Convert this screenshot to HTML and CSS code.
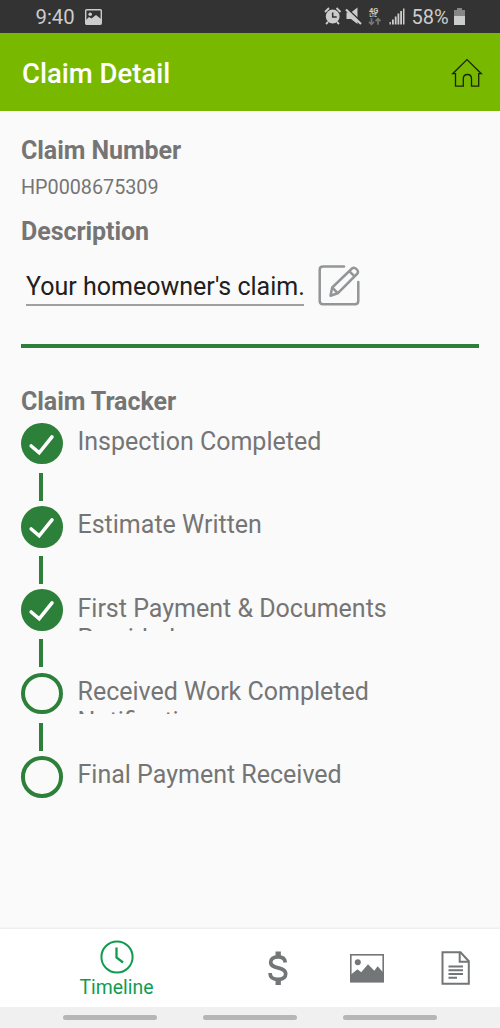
FILE: index.html
```html
<!DOCTYPE html>
<html lang="en">
<head>
<meta charset="utf-8">
<title>Claim Detail</title>
<link rel="stylesheet" href="styles.css">
</head>
<body>
<div class="screen">
  <div class="status">
    <span class="time">9:40</span>
    <svg class="pic" width="17" height="16" viewBox="0 0 17 16"><rect x=".7" y=".7" width="15.6" height="14.6" rx="1" fill="none" stroke="#ccc" stroke-width="1.4"/><circle cx="5.2" cy="5.2" r="1.8" fill="#ccc"/><path d="M1 11l3-3 2.500 1.500L11 6l5 4v5H1z" fill="#ccc"/></svg>
    <svg class="sys" width="82" height="19" viewBox="0 0 82 19">
      <path d="M1 5l4-4M12.500 1l4 4M4 15l-2 2M13 15l2 2" fill="none" stroke="#ccc" stroke-width="1.8"/>
      <circle cx="8.700" cy="9.500" r="6.900" fill="#ccc"/><path d="M8.700 5.500v4.600h4" fill="none" stroke="#333" stroke-width="1.500"/>
      <path d="M22.500 5.500h4.500l6.500-5v16.500l-6.500-5h-4.500z" fill="#ccc"/><path d="M22 3.500l15 14" transform="translate(1.300 -1.600)" stroke="#333" stroke-width="1.800"/><path d="M22 2.500l15 14.500" stroke="#ccc" stroke-width="2.200"/>
      <text x="45" y="6" class="gen">4G</text><text x="45.500" y="10.300" class="lte">LTE</text>
      <path d="M47.500 11.300v6M45 14.800l2.500 2.500 2.500-2.500M54 17.800V12M51.500 14.200l2.500-2.500 2.500 2.500" fill="none" stroke="#777" stroke-width="1.700"/>
      <path d="M65.500 15h1.400v2.500h-1.400zM68 12.500h1.800v5H68zM70.800 9.500h1.800v8h-1.800zM73.500 6.500h1.800v11h-1.800zM76.200 4H78v13.500h-1.800zM79 1.500h1.500v16H79z" fill="#ccc"/>
    </svg>
    <span class="pct">58%</span>
    <svg class="bat" width="11" height="17" viewBox="0 0 11 17"><path d="M3 0h5v2h3v15H0V2h3z" fill="#858585"/><path d="M0 8h11v9H0z" fill="#ccc"/></svg>
  </div>
  <header class="bar">
    <h1>Claim Detail</h1>
    <svg class="home" width="32" height="30" viewBox="0 0 32 30"><path d="M4.500 15.700H1.700L16 1.600l14.300 14.100h-2.600V28.200h-7.200v-7.400c0-2.700-1.500-4.300-4-4.300s-4.200 1.600-4.200 4.300v7.400H4.500z" fill="none" stroke="#182600" stroke-width="1.300"/></svg>
  </header>
  <main>
    <h2>Claim Number</h2>
    <p class="number">HP0008675309</p>
    <h2 class="dtitle">Description</h2>
    <div class="edit">
      <div class="field">Your homeowner's claim.</div>
      <svg width="42" height="42" viewBox="0 0 42 42" fill="none" stroke="#929697" stroke-width="2.500" stroke-linecap="round" stroke-linejoin="round"><path d="M26 1.400H5Q1.700 1.400 1.700 4.700v31q0 3.500 3.300 3.500h32q3.300 0 3.300-3.500V17"/><path d="M12.500 30.700l1.700-8.200L34 3.500q2-1.700 4.300.4 2.700 2.300 1.100 4.600L19.700 28.300zM14.400 22.700l5.300 5.500M31.500 6.300l5 5"/></svg>
    </div>
    <div class="rule"></div>
    <h2 class="ttitle">Claim Tracker</h2>
    <ol>
      <li class="done"><i class="dot"><svg width="42" height="42" viewBox="0 0 42 42"><path d="M10.200 23l8 6.800L31 13.900" fill="none" stroke="#fff" stroke-width="3.600" stroke-linecap="round"/></svg></i><span>Inspection Completed</span></li>
      <li class="done"><i class="dot"><svg width="42" height="42" viewBox="0 0 42 42"><path d="M10.200 23l8 6.800L31 13.900" fill="none" stroke="#fff" stroke-width="3.600" stroke-linecap="round"/></svg></i><span>Estimate Written</span></li>
      <li class="done"><i class="dot"><svg width="42" height="42" viewBox="0 0 42 42"><path d="M10.200 23l8 6.800L31 13.900" fill="none" stroke="#fff" stroke-width="3.600" stroke-linecap="round"/></svg></i><span>First Payment &amp; Documents<br>Provided</span></li>
      <li><i class="dot"></i><span>Received Work Completed<br>Notification</span></li>
      <li><i class="dot"></i><span>Final Payment Received</span></li>
    </ol>
  </main>
  <nav>
    <div class="tab active">
      <svg width="34" height="34" viewBox="0 0 34 34" fill="none" stroke="#109c50"><circle cx="17" cy="17" r="15.600" stroke-width="2"/><path d="M16.500 7.500v10l6.500 5" stroke-width="2.300"/></svg>
      <span>Timeline</span>
    </div>
    <div class="tab t2"><svg width="20" height="34" viewBox="0 0 20 34" fill="none" stroke="#727677"><path d="M17.300 11.500C17 7.500 14 5.800 10 5.800c-4.500 0-7.300 2-7.300 5.500 0 7.500 15 3.700 15 11.500 0 3.600-3 5.600-7.700 5.600-5 0-8-2.200-8-6.400" stroke-width="3.700"/><path d="M10.200.5v5M10.200 29v5" stroke-width="5.300"/></svg></div>
    <div class="tab t3"><svg width="34" height="29" viewBox="0 0 34 29"><rect x=".8" y=".8" width="32.400" height="27" fill="none" stroke="#727677" stroke-width="1.600"/><circle cx="7.800" cy="8.300" r="3" fill="#727677"/><path d="M1 20.500l6.500-5.200 3.700 3 6.800-8 6.300 6.500 3.300-4.500 5.400 6V28H1z" fill="#727677"/></svg></div>
    <div class="tab t4"><svg width="29" height="34" viewBox="0 0 29 34" fill="none" stroke="#727677" stroke-width="2"><path d="M1.500 1.200h18l8.300 9V32.700H1.500z"/><path d="M18.700 1.200v9.600h9"/><path d="M7.500 15.500H22M7.500 19.300H22M7.500 23H22M7.500 26.800h8.500" stroke-width="1.900"/></svg></div>
  </nav>
  <footer><b></b><b></b><b></b></footer>
</div>
</body>
</html>
```
FILE: styles.css
```css
* { box-sizing: border-box; }
body { margin: 0; font-family: Roboto, "Liberation Sans", sans-serif; color: #757575; }
h1, h2, p, ol { margin: 0; padding: 0; font-size: 25px; }
svg { display: block; flex: none; }
.screen { width: 500px; height: 1028px; display: flex; flex-direction: column; background: #fafafa; overflow: hidden; }
.status { height: 33px; background: #333; display: flex; align-items: center; color: #ccc; font-size: 20px; padding-left: 35.5px; flex: none; }
.time, .pct { line-height: 33px; padding-top: 1px; white-space: nowrap; }
.time { width: 49.5px; font-size: 20.3px; }
.sys { margin: 0 5.5px 0 222px; }
.pct { width: 42px; }
.gen { font: bold 7.5px Roboto, sans-serif; fill: #ccc; }
.lte { font: bold 4.5px Roboto, sans-serif; fill: #ccc; }
.bar { height: 78px; background: #78b900; flex: none; display: flex; align-items: center; justify-content: space-between; padding: 0 17px 0 22px; }
.bar h1 { color: #fff; font-size: 27.5px; font-weight: 500; line-height: 32px; margin-top: 3px; }
.home { margin-top: 2px; }
main { flex: 1; min-height: 0; padding: 25px 21px 0; }
h2 { font-weight: 700; line-height: 30px; letter-spacing: -.06px; }
.number { font-size: 19.75px; line-height: 24px; margin-top: 10px; }
.dtitle { margin-top: 17px; }
.edit { display: flex; height: 42px; margin: 18px 0 0 5px; gap: 14px; }
.field { width: 278px; height: 41px; border-bottom: 2px solid #a0a0a0; color: #202020; font-size: 25px; line-height: 43px; white-space: nowrap; }
.rule { height: 4px; background: #2c8039; margin-top: 37px; }
.ttitle { margin-top: 39px; }
ol { list-style: none; margin-top: 5.7px; font-weight: 400; }
li { height: 83.33px; display: grid; grid-template-columns: 41.5px 1fr; grid-template-rows: 41.5px 28px; column-gap: 15px; row-gap: 8.5px; }
.dot { width: 41.5px; height: 41.5px; border: 4px solid #2c8039; border-radius: 50%; overflow: hidden; }
.done .dot { border: 0; background: #2c8039; }
li:not(:last-child)::after { content: ""; width: 4px; background: #2c8039; margin-left: 18px; }
li span { height: 37px; margin-top: 4.3px; overflow: hidden; line-height: 30px; white-space: nowrap; }
nav { height: 78px; flex: none; display: flex; background: #fff; box-shadow: 0 -1px 2px #e9e9e9; }
.tab { display: flex; flex-direction: column; align-items: center; padding-top: 22px; }
.active { width: 233px; padding-top: 11px; color: #109c50; font-size: 19.4px; }
.active span { line-height: 24px; margin-top: 2px; }
.t2 { width: 89px; }
.t3 { width: 89px; padding-top: 25px; }
.t4 { width: 89px; }
footer { height: 21px; background: #f0f0f0; flex: none; display: flex; gap: 46px; padding: 8px 0 0 63px; }
footer b { width: 94px; height: 5px; border-radius: 3px; background: #b6b6b6; }
```
